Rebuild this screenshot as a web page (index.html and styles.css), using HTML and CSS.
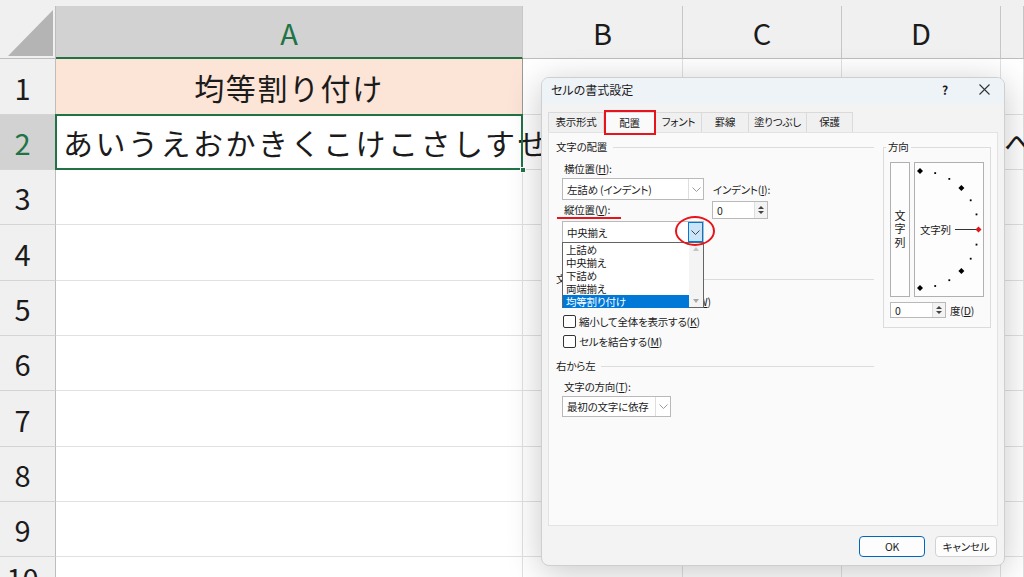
FILE: index.html
```html
<!DOCTYPE html>
<html lang="ja">
<head>
<meta charset="utf-8">
<title>セルの書式設定</title>
<link rel="stylesheet" href="styles.css">
</head>
<body>
<div class="app">
  <div class="topstrip"></div>
  <div class="sheet">
    <div class="corner"><svg width="55" height="52" viewBox="0 0 55 52"><polygon points="8,50 53,4 53,50" fill="#b4b4b4"/></svg></div>
    <div class="colhead sel">A</div>
    <div class="colhead">B</div>
    <div class="colhead">C</div>
    <div class="colhead">D</div>
    <div class="colhead"></div>

    <div class="rowhead">1</div>
    <div class="cell a1">均等割り付け</div>
    <div class="cell"></div><div class="cell"></div><div class="cell"></div><div class="cell"></div>

    <div class="rowhead sel">2</div>
    <div class="cell a2">あいうえおかきくこけこさしすせそたちつてとなにぬねのはひふへほ<span class="handle"></span></div>
    <div class="cell"></div><div class="cell"></div><div class="cell"></div><div class="cell"></div>

    <div class="rowhead">3</div>
    <div class="cell"></div><div class="cell"></div><div class="cell"></div><div class="cell"></div><div class="cell"></div>
    <div class="rowhead">4</div>
    <div class="cell"></div><div class="cell"></div><div class="cell"></div><div class="cell"></div><div class="cell"></div>
    <div class="rowhead">5</div>
    <div class="cell"></div><div class="cell"></div><div class="cell"></div><div class="cell"></div><div class="cell"></div>
    <div class="rowhead">6</div>
    <div class="cell"></div><div class="cell"></div><div class="cell"></div><div class="cell"></div><div class="cell"></div>
    <div class="rowhead">7</div>
    <div class="cell"></div><div class="cell"></div><div class="cell"></div><div class="cell"></div><div class="cell"></div>
    <div class="rowhead">8</div>
    <div class="cell"></div><div class="cell"></div><div class="cell"></div><div class="cell"></div><div class="cell"></div>
    <div class="rowhead">9</div>
    <div class="cell"></div><div class="cell"></div><div class="cell"></div><div class="cell"></div><div class="cell"></div>
    <div class="rowhead">10</div>
    <div class="cell"></div><div class="cell"></div><div class="cell"></div><div class="cell"></div><div class="cell"></div>
  </div>

  <div class="dialog">
    <div class="titlebar">
      <span class="title">セルの書式設定</span>
      <span class="help">?</span>
      <svg class="close" width="11" height="11" viewBox="0 0 11 11"><path d="M0.5 0.5 L10.5 10.5 M10.5 0.5 L0.5 10.5" stroke="#333" stroke-width="1.1" fill="none"/></svg>
    </div>
    <div class="dbody">
      <div class="tabs">
        <div class="tab t1">表示形式</div>
        <div class="tab t2 active">配置</div>
        <div class="tab t3">フォント</div>
        <div class="tab t4">罫線</div>
        <div class="tab t5">塗りつぶし</div>
        <div class="tab t6">保護</div>
      </div>
      <div class="panel">
        <div class="lcol">
          <div class="ghead"><span>文字の配置</span></div>
          <div class="align">
            <div class="astack">
              <div class="lbl l-h">横位置(<u>H</u>):</div>
              <div class="combo c-h"><span class="val">左詰め (インデント)</span><span class="dd"><svg width="9" height="5" viewBox="0 0 9 5"><polyline points="0.5,0.5 4.5,4.5 8.5,0.5" fill="none" stroke="#9a9a9a" stroke-width="1"/></svg></span></div>
              <div class="lbl l-v redline">縦位置(<u>V</u>):</div>
              <div class="combo c-v"><span class="val">中央揃え</span><span class="dd focus"><svg width="9" height="5" viewBox="0 0 9 5"><polyline points="0.5,0.5 4.5,4.5 8.5,0.5" fill="none" stroke="#444" stroke-width="1"/></svg></span>
                <div class="ring"></div>
                <div class="list">
                  <div class="items">
                    <div class="item">上詰め</div>
                    <div class="item">中央揃え</div>
                    <div class="item">下詰め</div>
                    <div class="item">両端揃え</div>
                    <div class="item selected">均等割り付け</div>
                  </div>
                  <div class="sbar"><i class="up"></i><i class="down"></i></div>
                </div>
              </div>
            </div>
            <div class="indent">
              <div class="lbl">インデント(<u>I</u>):</div>
              <div class="spin s-ind"><span class="val">0</span><span class="arrows"><i class="au"></i><i class="ad"></i></span></div>
            </div>
          </div>
          <div class="ghead g-ctl"><span>文字の制御</span></div>
          <div class="chk c1"><span class="box"></span><span>折り返して全体を表示する(<u>W</u>)</span></div>
          <div class="chk"><span class="box"></span><span>縮小して全体を表示する(<u>K</u>)</span></div>
          <div class="chk"><span class="box"></span><span>セルを結合する(<u>M</u>)</span></div>
          <div class="ghead g-rtl"><span>右から左</span></div>
          <div class="lbl l-t">文字の方向(<u>T</u>):</div>
          <div class="combo c-t"><span class="val">最初の文字に依存</span><span class="dd"><svg width="9" height="5" viewBox="0 0 9 5"><polyline points="0.5,0.5 4.5,4.5 8.5,0.5" fill="none" stroke="#9a9a9a" stroke-width="1"/></svg></span></div>
        </div>
        <fieldset class="dir">
          <legend>方向</legend>
          <div class="dirbody">
            <div class="boxes">
              <div class="vt"><span>文字列</span></div>
              <div class="semi">
                <svg width="68" height="133" viewBox="0 0 68 133">
                  <g fill="#000">
                    <polygon points="5,5 8,8 5,11 2,8"/>
                    <polygon points="46.4,22.1 49.4,25.1 46.4,28.1 43.4,25.1"/>
                    <polygon points="46.4,104.9 49.4,107.9 46.4,110.9 43.4,107.9"/>
                    <polygon points="5,122 8,125 5,128 2,125"/>
                    <rect x="19.3" y="9.2" width="1.8" height="1.8"/>
                    <rect x="33.4" y="15" width="1.8" height="1.8"/>
                    <rect x="54.8" y="36.4" width="1.8" height="1.8"/>
                    <rect x="60.6" y="50.5" width="1.8" height="1.8"/>
                    <rect x="60.6" y="80.7" width="1.8" height="1.8"/>
                    <rect x="54.8" y="94.8" width="1.8" height="1.8"/>
                    <rect x="33.4" y="116.3" width="1.8" height="1.8"/>
                    <rect x="19.3" y="122.1" width="1.8" height="1.8"/>
                  </g>
                  <text x="5" y="66.5" dominant-baseline="central" font-size="10.5" fill="#1b1b1b">文字列</text>
                  <line x1="40" y1="66.5" x2="61" y2="66.5" stroke="#333" stroke-width="1"/>
                  <polygon points="63.5,63.5 66.5,66.5 63.5,69.5 60.5,66.5" fill="#e0141b"/>
                </svg>
              </div>
            </div>
            <div class="degrow">
              <div class="spin s-deg"><span class="val">0</span><span class="arrows"><i class="au"></i><i class="ad"></i></span></div>
              <span class="deg">度(<u>D</u>)</span>
            </div>
          </div>
        </fieldset>
      </div>
      <div class="footer">
        <div class="btn ok">OK</div>
        <div class="btn cancel">キャンセル</div>
      </div>
    </div>
  </div>
</div>
</body>
</html>
```

FILE: styles.css
```css
* { box-sizing: border-box; }
html, body { margin: 0; padding: 0; }
body {
  width: 1024px;
  height: 577px;
  overflow: hidden;
  background: #fff;
  font-family: "Noto Sans CJK JP", "Noto Sans", sans-serif;
  color: #1b1b1b;
}
.app { position: relative; width: 1024px; height: 577px; overflow: hidden; }

/* ---------- spreadsheet ---------- */
.topstrip { height: 6px; background: #f0f0f0; }
.sheet {
  display: grid;
  grid-template-columns: 56px 467px 160px 159px 159px 1fr;
  grid-template-rows: 53px 56px 55px 55px 56px 55px 55px 56px 55px 55px 40px;
}
.corner {
  background: #f0f0f0;
  border-right: 1px solid #bdbdbd;
  border-bottom: 1px solid #bdbdbd;
}
.corner svg { display: block; }
.colhead {
  background: #f0f0f0;
  border-right: 1px solid #c6c6c6;
  border-bottom: 1px solid #bdbdbd;
  display: flex;
  align-items: center;
  justify-content: center;
  font-size: 29px;
  color: #1b1b1b;
}
.colhead.sel {
  background: #d2d2d2;
  color: #217346;
  border-bottom: 2px solid #217346;
}
.rowhead {
  background: #f0f0f0;
  border-right: 1px solid #bdbdbd;
  border-bottom: 1px solid #d4d4d4;
  display: flex;
  align-items: center;
  justify-content: center;
  padding-right: 10px;
  font-size: 29px;
  color: #1b1b1b;
}
.rowhead.sel { background: #d2d2d2; color: #217346; }
.cell {
  border-right: 1px solid #e1e1e1;
  border-bottom: 1px solid #e1e1e1;
}
.cell.a1 {
  background: #fce4d6;
  border-right-color: #9a9a9a;
  display: flex;
  align-items: center;
  justify-content: center;
  font-size: 30px;
  letter-spacing: 1.6px;
  color: #1b1b1b;
}
.cell.a2 {
  position: relative;
  display: flex;
  align-items: center;
  padding-left: 7px;
  font-size: 30px;
  letter-spacing: 2.5px;
  white-space: nowrap;
  color: #1b1b1b;
}
.cell.a2::after {
  content: "";
  position: absolute;
  left: -1px; top: -1px; right: -1px; bottom: -1px;
  border: 2px solid #217346;
}
.handle {
  position: absolute;
  right: -4px;
  bottom: -4px;
  width: 6px;
  height: 6px;
  background: #217346;
  border: 1px solid #fff;
  z-index: 1;
}

/* ---------- dialog ---------- */
.dialog {
  position: absolute;
  left: 541px;
  top: 77px;
  width: 464px;
  height: 489px;
  background: #f3f3f3;
  border: 1px solid #cfcfcf;
  border-radius: 8px;
  box-shadow: 0 6px 34px rgba(0, 0, 0, 0.22);
  font-family: "Noto Sans CJK JP", sans-serif;
  font-size: 10.5px;
  letter-spacing: -0.2px;
  font-feature-settings: "palt";
  color: #1b1b1b;
  display: flex;
  flex-direction: column;
  overflow: hidden;
  z-index: 10;
}
.titlebar {
  height: 26px;
  background: #eef3f8;
  display: flex;
  align-items: center;
  padding: 0 14px 4px 9px;
  flex: none;
}
.title { font-size: 12px; letter-spacing: 0; }
.help { margin-left: auto; font-size: 12px; font-weight: bold; margin-right: 31px; }
.close { display: block; }

.dbody { flex: 1; padding: 8px 6px 0 6px; display: flex; flex-direction: column; }
.tabs { display: flex; height: 20px; flex: none; }
.tab {
  height: 20px;
  border: 1px solid #dadada;
  border-bottom: none;
  margin-right: -1px;
  background: #f0f0f0;
  display: flex;
  align-items: center;
  justify-content: center;
  line-height: 1;
}
.t1 { width: 56px; }
.t2 { width: 53px; }
.t3 { width: 47px; }
.t4 { width: 48px; }
.t5 { width: 59px; }
.t6 { width: 47px; }
.tab.active {
  position: relative;
  background: #fafafa;
  height: 21px;
  z-index: 2;
}
.tab.active::after {
  content: "";
  position: absolute;
  left: 0; right: -1px; top: -3px; bottom: -2px;
  border: 2px solid #e8141b;
}

.panel {
  height: 394px;
  flex: none;
  background: #fafafa;
  border: 1px solid #e3e3e3;
  display: flex;
  padding: 7px 6px 0 7px;
  gap: 9px;
}
.lcol { width: 318px; display: flex; flex-direction: column; }
.ghead {
  height: 14px;
  line-height: 14px;
  display: flex;
  align-items: center;
}
.ghead::after {
  content: "";
  flex: 1;
  border-top: 1px solid #dcdcdc;
  margin-left: 6px;
}
.g-ctl { margin-top: 29px; }
.g-rtl { margin-top: 8px; }
.lbl { height: 14px; line-height: 14px; padding-left: 8px; white-space: nowrap; }
.align { display: flex; }
.astack { width: 148px; display: flex; flex-direction: column; }
.l-h { margin-top: 8px; }
.l-v { margin-top: 3px; }
.l-t { margin-top: 7px; }
.redline { position: relative; }
.redline::after {
  content: "";
  position: absolute;
  left: 1px;
  width: 64px;
  bottom: -2px;
  height: 2px;
  background: #e8141b;
}
.combo {
  position: relative;
  margin-left: 6px;
  width: 142px;
  height: 22px;
  background: #fff;
  border: 1px solid #b9b9b9;
  display: flex;
  align-items: center;
}
.combo .val { flex: 1; padding-left: 4px; white-space: nowrap; }
.combo .dd {
  width: 15px;
  align-self: stretch;
  border-left: 1px solid #dedede;
  display: flex;
  align-items: center;
  justify-content: center;
}
.combo .dd.focus {
  background: #cce4f7;
  border: 1px solid #0078d7;
}
.c-h { margin-top: 2px; }
.c-v { margin-top: 4px; }
.c-t { margin-top: 2px; width: 109px; height: 21px; }
.ring {
  position: absolute;
  left: 112px;
  top: -6px;
  width: 40px;
  height: 30px;
  border: 2px solid #e8141b;
  border-radius: 50%;
  z-index: 6;
}
.list {
  position: absolute;
  left: -1px;
  top: 100%;
  width: 142px;
  height: 66px;
  background: #fff;
  border: 1px solid #646464;
  display: flex;
  z-index: 5;
}
.items { flex: 1; }
.item { height: 13px; line-height: 13px; padding-left: 3px; white-space: nowrap; }
.item.selected { background: #0078d7; color: #fff; }
.sbar {
  width: 14px;
  background: #f4f4f4;
  display: flex;
  flex-direction: column;
  align-items: center;
  justify-content: space-between;
  padding: 4px 0 4px;
}
.sbar i { display: block; width: 0; height: 0; border-left: 3.5px solid transparent; border-right: 3.5px solid transparent; }
.sbar .up { border-bottom: 4px solid #c4c4c4; }
.sbar .down { border-top: 4px solid #a8a8a8; }

.indent { margin-left: 8px; margin-top: 29px; display: flex; flex-direction: column; }
.indent .lbl { padding-left: 1px; }
.spin {
  background: #fff;
  border: 1px solid #b9b9b9;
  display: flex;
  align-items: center;
}
.spin .val { flex: 1; padding-left: 4px; }
.spin .arrows {
  width: 13px;
  align-self: stretch;
  border-left: 1px solid #dedede;
  background: #f3f3f3;
  display: flex;
  flex-direction: column;
  align-items: center;
  justify-content: center;
  gap: 2px;
}
.spin .arrows i { display: block; width: 0; height: 0; border-left: 3px solid transparent; border-right: 3px solid transparent; }
.spin .arrows .au { border-bottom: 3px solid #444; }
.spin .arrows .ad { border-top: 3px solid #444; }
.s-ind { margin-top: 4px; width: 56px; height: 18px; }

.chk { height: 20px; display: flex; align-items: center; padding-left: 7px; white-space: nowrap; }
.chk .box {
  width: 13px;
  height: 13px;
  border: 1px solid #333;
  border-radius: 2px;
  background: #fff;
  margin-right: 3px;
  flex: none;
}
.c1 { margin-top: 5px; }

.dir {
  margin: 0;
  padding: 0 6px 9px 2px;
  width: 108px;
  height: 188px;
  min-width: 0;
  border: 1px solid #dcdcdc;
}
.dir legend { padding: 0 2px; margin: 0; font-size: 10.5px; line-height: 14px; }
.dirbody { padding: 8px 0 0 4px; }
.boxes { display: flex; gap: 4px; height: 135px; }
.vt {
  width: 20px;
  border: 1px solid #b0b0b0;
  background: #fdfdfd;
  display: flex;
  align-items: center;
  justify-content: center;
}
.vt span { writing-mode: vertical-rl; letter-spacing: 2.5px; font-size: 11px; margin-top: 2px; }
.semi { width: 70px; border: 1px solid #b0b0b0; background: #fdfdfd; }
.semi svg { display: block; }
.degrow { display: flex; align-items: center; margin-top: 5px; }
.s-deg { width: 56px; height: 16px; }
.deg { margin-left: 4px; }

.footer { display: flex; justify-content: flex-end; gap: 10px; padding: 10px 1px 0 0; }
.btn {
  height: 21px;
  border-radius: 4px;
  background: #fdfdfd;
  border: 1px solid #d2d2d2;
  display: flex;
  align-items: center;
  justify-content: center;
}
.btn.ok { width: 66px; border: 1px solid #0067c0; }
.btn.cancel { width: 62px; }
```
